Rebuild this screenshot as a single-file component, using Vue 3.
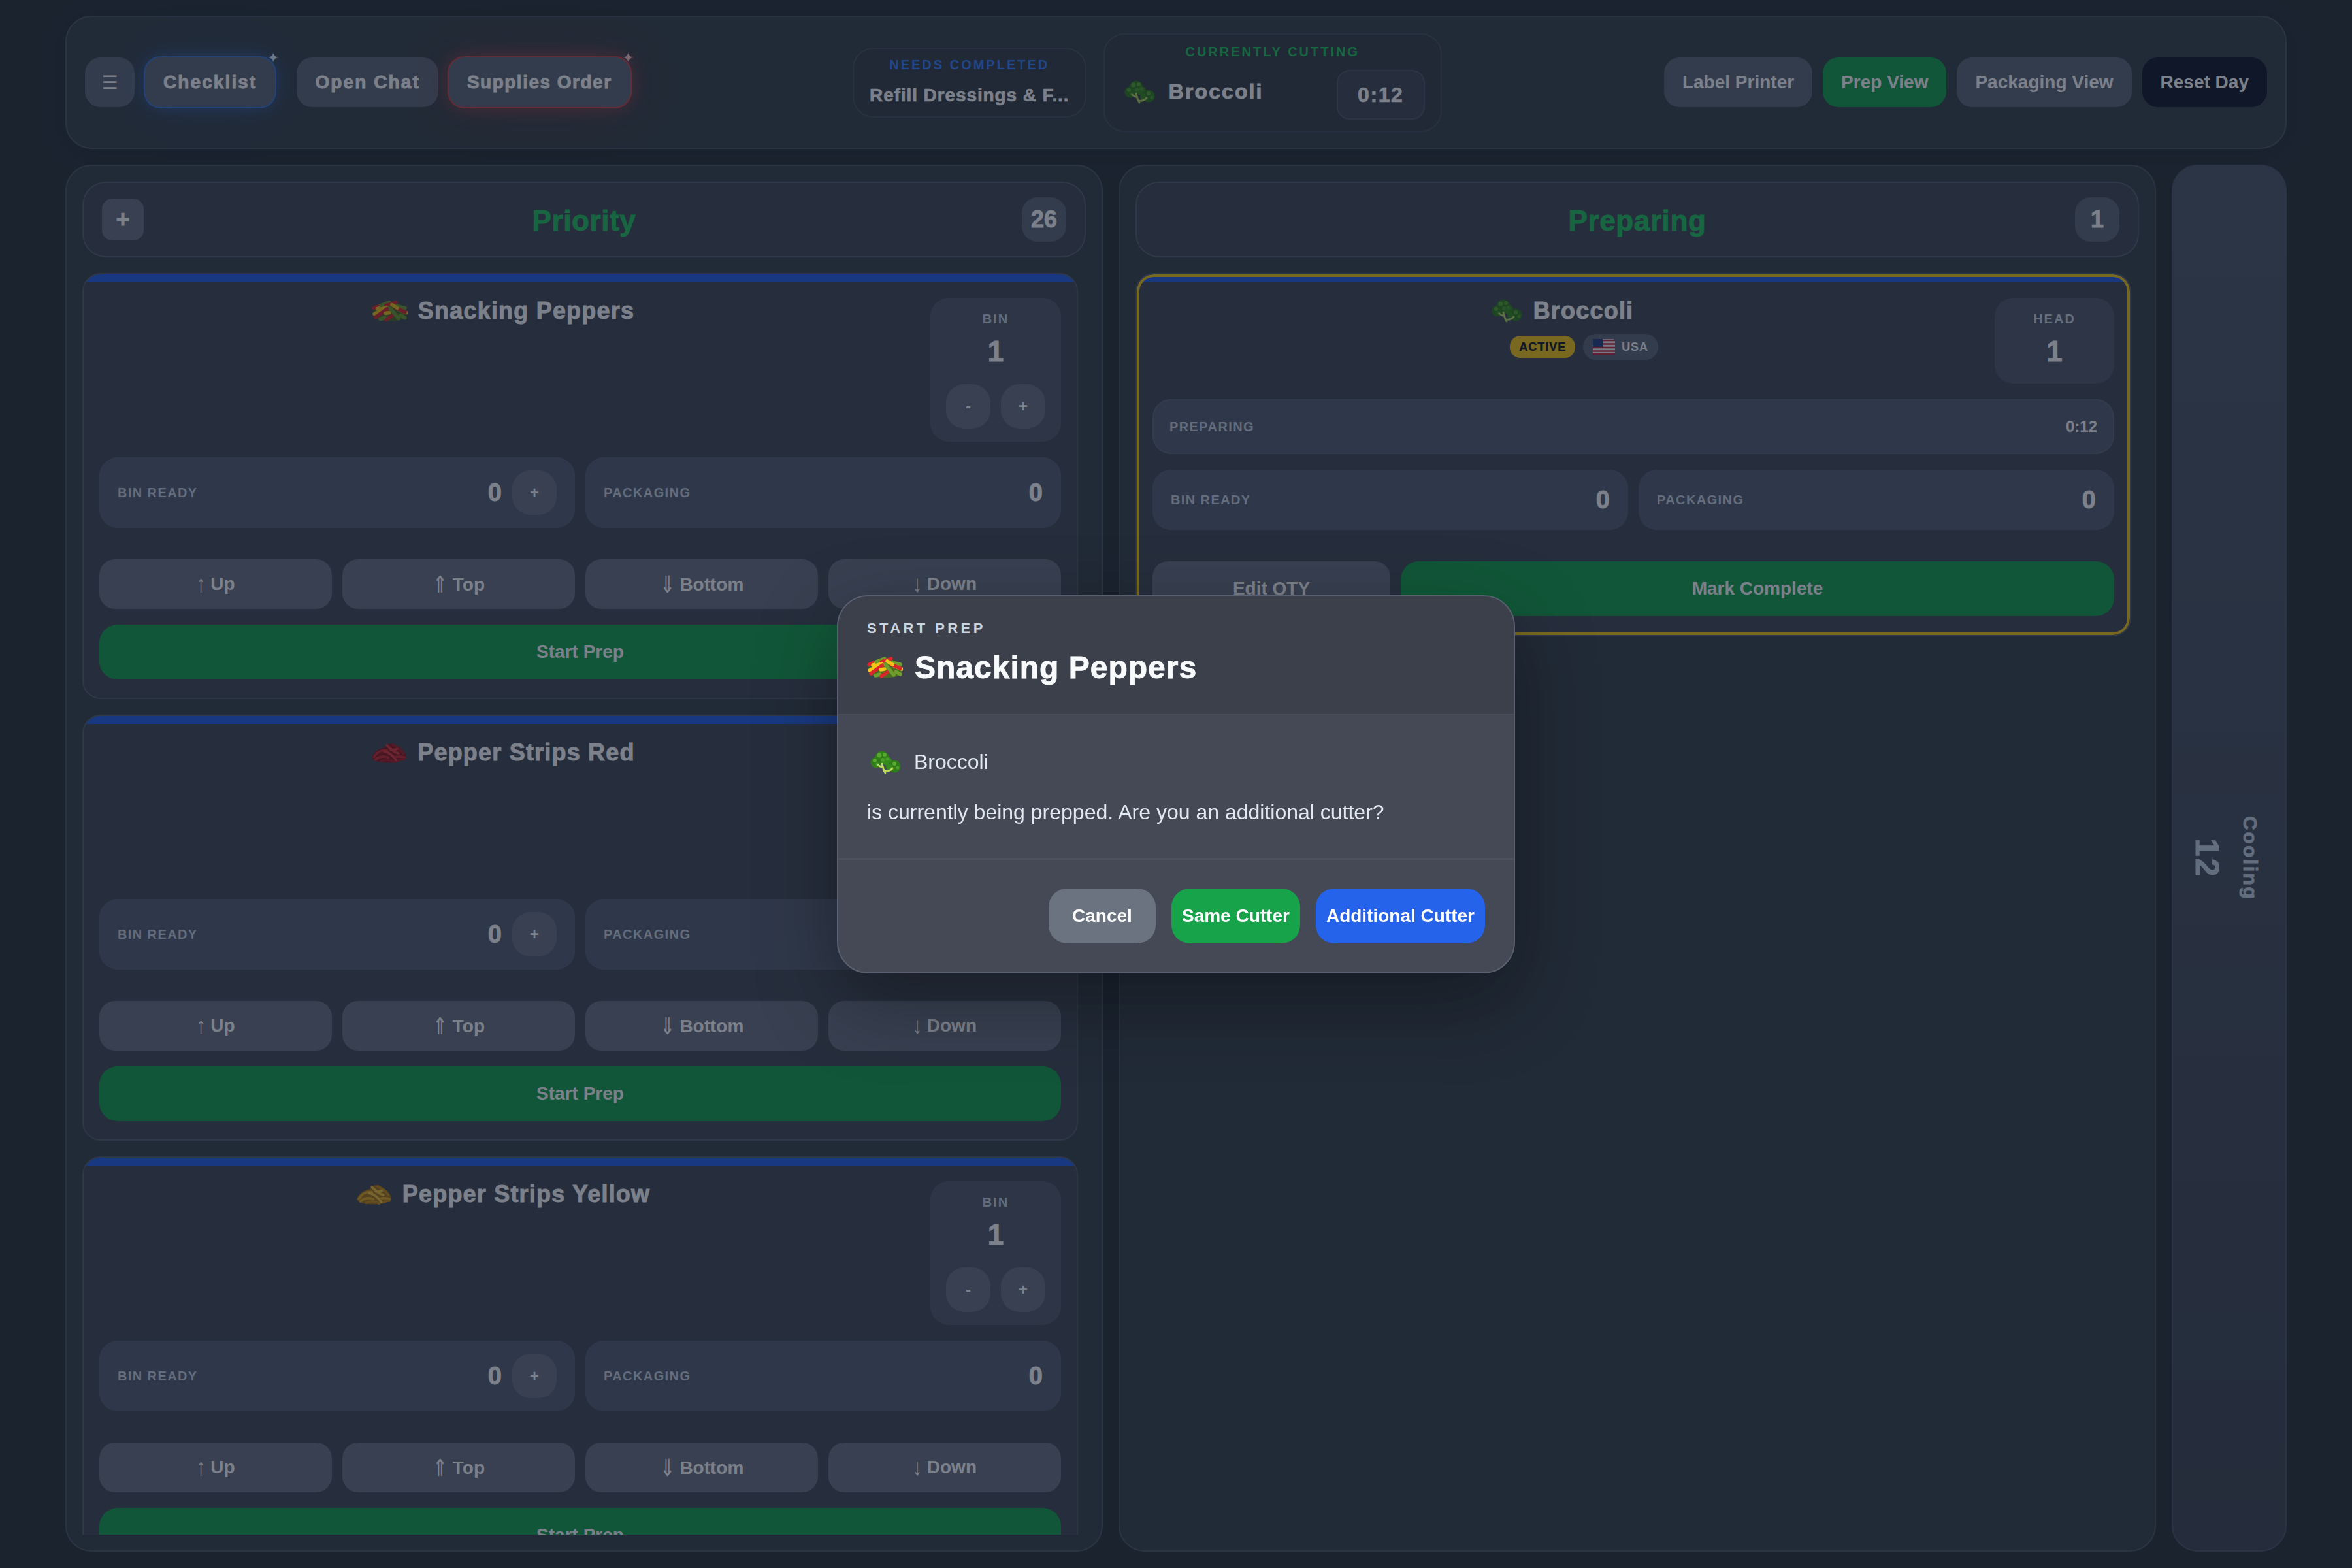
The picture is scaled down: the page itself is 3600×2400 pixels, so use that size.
<template>
  <div class="app">
    <!-- shared food icons -->
    <svg class="sprite" aria-hidden="true">
      <symbol id="ico-peppers" viewBox="0 0 55 33">
        <path d="M2 14 C10 5 30 -1 44 7 C52 11 55 20 52 27 C42 34 16 34 6 27 Z" fill="#4a6a22" />
        <line v-for="(s, i) in snackStrips" :key="i" :x1="s[0]" :y1="s[1]" :x2="s[2]" :y2="s[3]" :stroke="s[4]" stroke-width="5.500" stroke-linecap="round" />
      </symbol>
      <symbol id="ico-red" viewBox="0 0 50 30">
        <path :d="pileShape" fill="#8f161c" />
        <path v-for="(d, i) in pileCurls" :key="i" :d="d" :stroke="redTones[i % 3]" stroke-width="3.400" stroke-linecap="round" fill="none" />
      </symbol>
      <symbol id="ico-yellow" viewBox="0 0 50 30">
        <path :d="pileShape" fill="#a8740f" />
        <path v-for="(d, i) in pileCurls" :key="i" :d="d" :stroke="yellowTones[i % 3]" stroke-width="3.400" stroke-linecap="round" fill="none" />
      </symbol>
      <symbol id="ico-broccoli" viewBox="0 0 48 36">
        <circle cx="19" cy="11" r="10.500" fill="#2f7d18" />
        <circle cx="10" cy="18" r="8.500" fill="#2f7d18" />
        <circle cx="27" cy="16" r="7" fill="#358a1c" />
        <circle cx="38" cy="24" r="9.500" fill="#2f7d18" />
        <circle cx="30" cy="25" r="5" fill="#358a1c" />
        <circle cx="15" cy="7" r="3.500" fill="#58a832" />
        <circle cx="23" cy="6" r="3" fill="#58a832" />
        <circle cx="8" cy="15" r="3" fill="#58a832" />
        <circle cx="20" cy="14" r="3" fill="#4c9c2a" />
        <circle cx="12" cy="21" r="2.500" fill="#4c9c2a" />
        <circle cx="27" cy="13" r="2.500" fill="#4c9c2a" />
        <circle cx="38" cy="20" r="3" fill="#58a832" />
        <circle cx="43" cy="26" r="2.500" fill="#4c9c2a" />
        <circle cx="34" cy="27" r="2.200" fill="#4c9c2a" />
        <path d="M24 34 C21 29 20 25 19 20 M23 31 C28 32 31 31 35 27 M21 26 C18 25 15 24 13 22" stroke="#bcdc62" stroke-width="2.800" fill="none" stroke-linecap="round" />
      </symbol>
      <symbol id="ico-flag" viewBox="0 0 34 24">
        <rect width="34" height="24" rx="4" fill="#f4f4f4" />
        <path d="M0 2h34M0 7.500h34M0 13h34M0 18.500h34M0 23h34" stroke="#c8283c" stroke-width="2.600" />
        <rect width="15" height="12" fill="#27407f" />
      </symbol>
    </svg>

    <header class="topbar">
      <div class="top-group">
        <button class="top-btn menu-btn">☰</button>
        <button class="top-btn heavy glow-blue">Checklist<span class="spark">✦</span></button>
        <button class="top-btn heavy">Open Chat</button>
        <button class="top-btn heavy glow-red">Supplies Order<span class="spark">✦</span></button>
      </div>

      <div class="top-center">
        <div class="info-box needs">
          <div class="info-label blue">NEEDS COMPLETED</div>
          <div class="needs-text">Refill Dressings &amp; F...</div>
        </div>
        <div class="info-box cutting">
          <div class="info-label green">CURRENTLY CUTTING</div>
          <div class="cut-row">
            <div class="cut-name">
              <svg class="ico-cut"><use href="#ico-broccoli" /></svg>
              <span>Broccoli</span>
            </div>
            <div class="cut-timer">0:12</div>
          </div>
        </div>
      </div>

      <div class="top-group">
        <button class="top-btn">Label Printer</button>
        <button class="top-btn btn-green">Prep View</button>
        <button class="top-btn">Packaging View</button>
        <button class="top-btn btn-dark">Reset Day</button>
      </div>
    </header>

    <main class="board">
      <!-- Priority -->
      <section class="panel">
        <div class="panel-head">
          <button class="add-btn">+</button>
          <h2>Priority</h2>
          <span class="count">26</span>
        </div>
        <div class="card-list">
          <article v-for="item in priority" :key="item.name" class="card">
            <div class="card-top">
              <div class="card-title">
                <svg class="ico-title"><use :href="item.icon" /></svg>
                <span>{{ item.name }}</span>
              </div>
              <div class="unit-box">
                <div class="stat-label">BIN</div>
                <div class="unit-val">1</div>
                <div class="unit-btns">
                  <button class="round-btn">-</button>
                  <button class="round-btn">+</button>
                </div>
              </div>
            </div>
            <div class="stats">
              <div class="stat">
                <span class="stat-label">BIN READY</span>
                <div class="stat-right">
                  <span class="stat-val">0</span>
                  <button class="round-btn">+</button>
                </div>
              </div>
              <div class="stat">
                <span class="stat-label">PACKAGING</span>
                <span class="stat-val">0</span>
              </div>
            </div>
            <div class="moves">
              <button v-for="m in moves" :key="m.label" class="move-btn"><span class="arrow">{{ m.arrow }}</span> {{ m.label }}</button>
            </div>
            <button class="start-btn">Start Prep</button>
          </article>
        </div>
      </section>

      <!-- Preparing -->
      <section class="panel">
        <div class="panel-head">
          <span class="head-spacer"></span>
          <h2>Preparing</h2>
          <span class="count">1</span>
        </div>
        <div class="card-list">
          <article class="card active">
            <div class="card-top">
              <div class="card-title column">
                <div class="title-line">
                  <svg class="ico-cut"><use href="#ico-broccoli" /></svg>
                  <span>Broccoli</span>
                </div>
                <div class="badges">
                  <span class="badge-active">ACTIVE</span>
                  <span class="badge-origin">
                    <svg class="ico-flag"><use href="#ico-flag" /></svg>USA
                  </span>
                </div>
              </div>
              <div class="unit-box head">
                <div class="stat-label">HEAD</div>
                <div class="unit-val">1</div>
              </div>
            </div>
            <div class="timer-row">
              <span class="stat-label">PREPARING</span>
              <span class="timer-val">0:12</span>
            </div>
            <div class="stats short">
              <div class="stat">
                <span class="stat-label">BIN READY</span>
                <span class="stat-val">0</span>
              </div>
              <div class="stat">
                <span class="stat-label">PACKAGING</span>
                <span class="stat-val">0</span>
              </div>
            </div>
            <div class="done-row">
              <button class="move-btn edit-btn">Edit QTY</button>
              <button class="start-btn done-btn">Mark Complete</button>
            </div>
          </article>
        </div>
      </section>

      <!-- Cooling rail -->
      <aside class="rail">
        <span class="rail-name">Cooling</span>
        <span class="rail-count">12</span>
      </aside>
    </main>

    <!-- Start prep dialog -->
    <div class="overlay">
      <div class="modal">
        <div class="modal-head">
          <div class="modal-eyebrow">START PREP</div>
          <div class="modal-title">
            <svg class="ico-modal"><use href="#ico-peppers" /></svg>
            <span>Snacking Peppers</span>
          </div>
        </div>
        <div class="modal-body">
          <div class="modal-item">
            <svg class="ico-modal-item"><use href="#ico-broccoli" /></svg>
            <span>Broccoli</span>
          </div>
          <p>is currently being prepped. Are you an additional cutter?</p>
        </div>
        <div class="modal-foot">
          <button class="modal-btn cancel">Cancel</button>
          <button class="modal-btn same">Same Cutter</button>
          <button class="modal-btn extra">Additional Cutter</button>
        </div>
      </div>
    </div>
  </div>
</template>

<script setup>
const moves = [
  { arrow: '↑', label: 'Up' },
  { arrow: '⇑', label: 'Top' },
  { arrow: '⇓', label: 'Bottom' },
  { arrow: '↓', label: 'Down' }
]

const priority = [
  { name: 'Snacking Peppers', icon: '#ico-peppers' },
  { name: 'Pepper Strips Red', icon: '#ico-red' },
  { name: 'Pepper Strips Yellow', icon: '#ico-yellow' }
]

const R = '#d9262c'
const Y = '#f5c518'
const G = '#6f9e2c'

const snackStrips = [
  [3, 12, 11, 9, R], [9, 13, 19, 10, Y], [14, 8, 27, 3, G], [38, 9, 51, 12, G], [41, 14, 53, 19, Y],
  [22, 8, 37, 3, R], [4, 21, 23, 11, Y], [37, 12, 51, 18, R], [6, 26, 24, 13, R], [31, 7, 39, 12, Y],
  [44, 23, 51, 27, G], [13, 29, 20, 27, G], [21, 20, 27, 19, Y], [22, 30, 31, 24, R], [28, 12, 41, 28, G]
]

// same heap of curled strips for the red and yellow pepper icons
const pileShape = 'M1 22 C4 13 12 9 19 8 C23 2 29 1 33 5 C40 6 46 12 49 19 C47 26 38 29 25 29 C13 29 3 27 1 22 Z'
const pileCurls = [
  'M4 21 C8 14 15 11 22 12',
  'M22 5 C26 9 31 14 38 16',
  'M30 4 C36 7 41 10 45 16',
  'M6 25 C11 20 18 19 24 22',
  'M18 13 C24 14 32 20 35 26',
  'M14 27 C20 24 28 25 32 28',
  'M34 21 C38 20 43 20 47 22',
  'M27 11 C30 12 33 11 36 10',
  'M38 26 C41 24 43 24 46 24'
]
const redTones = ['#c92a30', '#e0393a', '#a81d24']
const yellowTones = ['#e3a91f', '#f5c33a', '#c98f15']
</script>

<style>
html, body { margin: 0; background: #2a3237; }
</style>

<style scoped>
/* sizes are written at 1x, the page is 2x */
.app {
  zoom: 2;
  width: 1800px;
  height: 1200px;
  box-sizing: border-box;
  padding: 12px 50px 12.5px;
  display: flex;
  flex-direction: column;
  gap: 12px;
  background: #2a3237;
  font-family: "Liberation Sans", Arial, sans-serif;
  color: #fff;
  overflow: hidden;
}
.sprite { position: absolute; width: 0; height: 0; }
button { font-family: inherit; border: none; color: #fff; padding: 0; }

/* top bar */
.topbar {
  flex: 0 0 102px;
  box-sizing: border-box;
  display: flex;
  align-items: center;
  justify-content: space-between;
  padding: 0 14px;
  background: #394147;
  border: 1px solid #4d5863;
  border-radius: 20px;
  box-shadow: 0 4px 20px rgba(0, 0, 0, 0.12);
}
.top-group { display: flex; align-items: center; gap: 8px; }
.top-btn {
  position: relative;
  height: 38px;
  padding: 0 14px;
  background: #616978;
  border-radius: 12px;
  font-size: 14px;
  font-weight: 700;
}
.top-btn.heavy { letter-spacing: 1.05px; -webkit-text-stroke: 0.45px; }
.menu-btn { width: 38px; padding: 0; font-size: 14px; font-weight: 400; font-family: "DejaVu Sans", sans-serif; }
.glow-blue { box-shadow: 0 0 0 1px rgba(59, 130, 246, 0.8), 0 0 14px rgba(59, 130, 246, 0.5), 0 0 44px rgba(59, 130, 246, 0.16); margin-right: 8.5px; }
.glow-red { box-shadow: 0 0 0 1px rgba(239, 68, 68, 0.8), 0 0 14px rgba(239, 68, 68, 0.5), 0 0 44px rgba(239, 68, 68, 0.14); }
.top-btn.glow-red { letter-spacing: 0.75px; }
.spark {
  position: absolute;
  top: -6px;
  right: -3px;
  font-size: 11px;
  -webkit-text-stroke: 0;
  letter-spacing: 0;
  font-family: "DejaVu Sans", sans-serif;
  color: #dbeafe;
}
.glow-red .spark { color: #fecaca; }
.btn-green { background: #16a34a; }
.btn-dark { background: #111827; }

.top-center { display: flex; align-items: center; gap: 13px; }
.info-box {
  box-sizing: border-box;
  border: 1px solid #47515e;
  border-radius: 16px;
  background: rgba(0, 0, 0, 0.03);
  text-align: center;
}
.needs { width: 179px; height: 53.5px; padding: 5px 6px 0; }
.cutting { width: 259px; height: 75.5px; padding: 6px 12px 0; }
.info-label {
  font-size: 10px;
  line-height: 14px;
  font-weight: 700;
  letter-spacing: 1.5px;
}
.blue { color: #3b82f6; }
.green { color: #22c55e; }
.needs-text {
  margin-top: 6.5px;
  font-size: 14px;
  line-height: 20px;
  font-weight: 700;
  letter-spacing: 0.45px;
  white-space: nowrap;
  -webkit-text-stroke: 0.3px;
}
.cut-row { margin-top: 7px; display: flex; align-items: center; justify-content: space-between; }
.cut-name {
  display: flex;
  align-items: center;
  gap: 10px;
  margin-bottom: 4px;
  padding-left: 2px;
  font-size: 16px;
  font-weight: 700;
  letter-spacing: 1.05px;
  -webkit-text-stroke: 0.45px;
}
.ico-cut { width: 25px; height: 18px; flex: none; }
.cut-timer {
  box-sizing: border-box;
  width: 67.5px;
  height: 38px;
  line-height: 36px;
  border: 1px solid #505a69;
  border-radius: 10px;
  background: #444a54;
  font-size: 16px;
  font-weight: 700;
  letter-spacing: 0.8px;
  -webkit-text-stroke: 0.3px;
}

/* board */
.board {
  flex: 1;
  min-height: 0;
  display: grid;
  grid-template-columns: 1fr 1fr 88px;
  gap: 12px;
}
.panel {
  min-height: 0;
  box-sizing: border-box;
  display: flex;
  flex-direction: column;
  gap: 12px;
  padding: 12px;
  background: #394147;
  border: 1px solid #4d5863;
  border-radius: 20px;
}
.panel-head {
  flex: 0 0 58px;
  box-sizing: border-box;
  display: flex;
  align-items: center;
  justify-content: space-between;
  padding: 0 14px;
  background: #444a54;
  border: 1px solid #56606d;
  border-radius: 18px;
}
.panel-head h2 {
  margin: 0;
  padding-top: 2px;
  font-size: 22px;
  font-weight: 700;
  letter-spacing: 0.3px;
  color: #22c55e;
  -webkit-text-stroke: 0.45px;
}
.add-btn {
  width: 32px;
  height: 32px;
  margin-right: 2px;
  background: #6b7280;
  border-radius: 8px;
  font-size: 18px;
  font-weight: 700;
  -webkit-text-stroke: 0.45px;
}
.head-spacer { width: 32px; margin-right: 2px; }
.count {
  width: 34px;
  height: 34px;
  line-height: 34px;
  text-align: center;
  background: #616978;
  border-radius: 12px;
  font-size: 18px;
  font-weight: 700;
  -webkit-text-stroke: 0.4px;
}

.card-list {
  flex: 1;
  min-height: 0;
  display: flex;
  flex-direction: column;
  gap: 12px;
  padding-right: 6px;
  overflow: hidden;
}
.card {
  position: relative;
  flex: none;
  box-sizing: border-box;
  height: 326px;
  padding: 18px 12px 15px;
  background: #444a54;
  border: 1px solid #56606d;
  border-radius: 14px;
  overflow: hidden;
}
.card::before {
  content: "";
  position: absolute;
  left: 0;
  right: 0;
  top: 0;
  height: 6px;
  background: #2563eb;
}
.card.active { height: 278px; }
.card.active::after {
  content: "";
  position: absolute;
  inset: 0;
  border: 2px solid #facc15;
  border-radius: 13px;
  pointer-events: none;
}
.card-top { display: flex; gap: 18px; margin-bottom: 12px; }
.card-title {
  flex: 1;
  min-width: 0;
  display: flex;
  align-items: center;
  justify-content: center;
  align-self: flex-start;
  gap: 8px;
  height: 20px;
  font-size: 18px;
  font-weight: 700;
  letter-spacing: 0.6px;
  -webkit-text-stroke: 0.45px;
}
.card-title.column { flex-direction: column; height: auto; gap: 7.5px; }
.title-line { display: flex; align-items: center; gap: 8px; height: 20px; }
.ico-title { width: 27.5px; height: 17px; flex: none; }
.unit-box {
  box-sizing: border-box;
  flex: 0 0 100px;
  height: 110px;
  padding-top: 9px;
  background: #525a68;
  border-radius: 14px;
  text-align: center;
}
.unit-box.head { flex-basis: 91.5px; height: 65.5px; }
.unit-box .stat-label { line-height: 14px; letter-spacing: 1px; }
.unit-val { font-size: 22px; line-height: 26px; margin-top: 5px; font-weight: 700; -webkit-text-stroke: 0.45px; }
.unit-btns { display: flex; justify-content: center; gap: 8px; margin-top: 12px; }
.round-btn {
  flex: none;
  width: 34px;
  height: 34px;
  background: #6b7280;
  border-radius: 14px;
  font-size: 12px;
  font-weight: 700;
}
.stat-label {
  font-size: 10px;
  font-weight: 700;
  letter-spacing: 0.7px;
  color: #cbd5e1;
}
.stats { display: grid; grid-template-columns: 1fr 1fr; gap: 8px; height: 54px; margin-bottom: 24px; }
.stats.short { height: 46px; }
.stat {
  display: flex;
  align-items: center;
  justify-content: space-between;
  padding: 0 14px;
  background: #586071;
  border-radius: 14px;
}
.stat-right { display: flex; align-items: center; gap: 8px; }
.stat-val { font-size: 19px; font-weight: 700; -webkit-text-stroke: 0.45px; }
.moves { display: grid; grid-template-columns: repeat(4, 1fr); gap: 8px; margin-bottom: 12px; }
.move-btn {
  height: 38px;
  background: #6b7280;
  border-radius: 12px;
  font-size: 14px;
  font-weight: 700;
}
.arrow { display: inline-block; font-weight: 400; transform: scaleY(1.3); }
.start-btn {
  display: block;
  width: 100%;
  height: 42px;
  background: #16a34a;
  border-radius: 14px;
  font-size: 14px;
  font-weight: 700;
}
.timer-row {
  box-sizing: border-box;
  height: 42px;
  margin-bottom: 12px;
  display: flex;
  align-items: center;
  justify-content: space-between;
  padding: 0 12px;
  background: #586071;
  border: 1px solid #5f6879;
  border-radius: 14px;
}
.timer-val { font-size: 12px; font-weight: 700; }
.done-row { display: flex; gap: 8px; }
.edit-btn { flex: 1; height: 42px; }
.done-btn { flex: 3; width: auto; }
.badges { display: flex; align-items: center; gap: 6px; margin-left: 34px; }
.badge-active {
  padding: 0 7px;
  height: 17px;
  line-height: 17px;
  background: #facc15;
  color: #111827;
  border-radius: 8px;
  font-size: 9px;
  font-weight: 700;
  letter-spacing: 0.5px;
  -webkit-text-stroke: 0.2px;
}
.badge-origin {
  display: flex;
  align-items: center;
  gap: 5px;
  height: 20px;
  padding: 0 7.5px;
  background: #616978;
  border-radius: 10px;
  font-size: 9px;
  font-weight: 700;
  letter-spacing: 0.4px;
  -webkit-text-stroke: 0;
}
.ico-flag { width: 17px; height: 12px; flex: none; }

.rail {
  writing-mode: vertical-rl;
  display: flex;
  flex-direction: column;
  align-items: center;
  justify-content: center;
  gap: 10px;
  box-sizing: border-box;
  padding-right: 7px;
  background: linear-gradient(180deg, #505a69, #404650);
  border: 1px solid #4e5866;
  border-radius: 20px;
  color: #c8d4e4;
}
.rail-name { font-size: 15px; font-weight: 700; letter-spacing: 1.25px; -webkit-text-stroke: 0.45px; }
.rail-count { font-size: 25px; font-weight: 700; letter-spacing: 1.5px; -webkit-text-stroke: 0.45px; }

/* dialog */
.overlay {
  position: fixed;
  inset: 0;
  display: flex;
  align-items: center;
  justify-content: center;
  background: rgba(15, 23, 42, 0.55);
}
.modal {
  box-sizing: border-box;
  width: 519px;
  height: 289.5px;
  background: #444955;
  border: 1px solid #5a6070;
  border-radius: 24px;
  overflow: hidden;
  box-shadow: 0 20px 60px rgba(0, 0, 0, 0.35);
}
.modal-head {
  box-sizing: border-box;
  height: 91px;
  padding: 12.5px 22px 0;
  background: #3b404b;
  border-bottom: 1px solid #4a4f5c;
}
.modal-eyebrow {
  font-size: 11px;
  line-height: 24px;
  font-weight: 700;
  letter-spacing: 2.2px;
  color: #cbd5e1;
}
.modal-title {
  display: flex;
  align-items: center;
  gap: 9px;
  margin-top: 3px;
  font-size: 24px;
  line-height: 30px;
  font-weight: 700;
  color: #f8fafc;
  letter-spacing: 0.5px;
  -webkit-text-stroke: 0.45px;
}
.ico-modal { width: 27.5px; height: 16.5px; flex: none; }
.modal-body {
  box-sizing: border-box;
  height: 110.5px;
  padding: 27px 22px 0;
  border-bottom: 1px solid #4d5260;
  font-size: 16px;
  color: #e2e8f0;
}
.modal-item { display: flex; align-items: center; gap: 10px; height: 18px; padding-left: 2px; }
.ico-modal-item { width: 24px; height: 18px; flex: none; }
.modal-body p { margin: 20px 0 0; line-height: 18px; }
.modal-foot { display: flex; justify-content: flex-end; gap: 12px; padding: 22px 22px 0; }
.modal-btn {
  height: 42px;
  padding: 0 8px;
  border-radius: 14px;
  font-size: 14px;
  font-weight: 700;
}
.cancel { min-width: 82px; background: #6b7280; }
.same { background: #16a34a; }
.extra { background: #2563eb; }
</style>
